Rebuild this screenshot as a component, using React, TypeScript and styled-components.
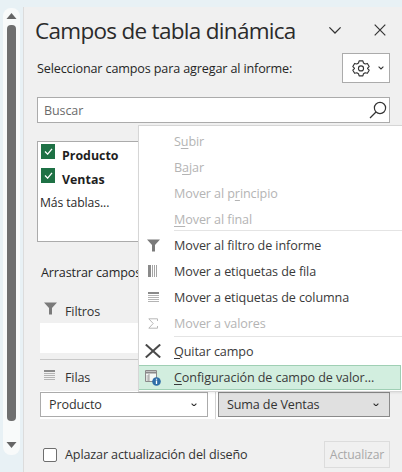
import React from "react";
import styled, { createGlobalStyle } from "styled-components";

const Global = createGlobalStyle`
  html, body { margin: 0; padding: 0; background: #e8f1f5; }
  body { font-family: "Open Sans", "Noto Sans", sans-serif; color: #262626; }
`;

const Page = styled.div`
  position: relative;
  width: 402px;
  height: 472px;
  overflow: hidden;
  display: flex;
  flex-direction: column;
  background: #e8f1f5;
`;
const TopStrip = styled.div`
  height: 7px;
  flex: none;
`;
const Body = styled.div`
  flex: 1;
  display: flex;
  min-height: 0;
`;
const SideGutter = styled.div`
  width: 23px;
  flex: none;
  padding: 1px 0 0 3px;
  box-sizing: border-box;
`;
const Scroll = styled.div`
  width: 17px;
  height: 447px;
  border-radius: 8px;
  background: #f8fafa;
  display: flex;
  flex-direction: column;
  align-items: center;
  padding: 5px 0;
  box-sizing: border-box;
`;
const Thumb = styled.div`
  width: 9px;
  height: 396px;
  margin: 6px 0 21px;
  border-radius: 4px;
  background: #6f6f6f;
  flex: none;
`;
const Pane = styled.div`
  flex: 1;
  background: #f0f0f0;
  border-left: 1px solid #dcdcdc;
  padding: 0 12px;
  display: flex;
  flex-direction: column;
  min-width: 0;
`;
const TitleRow = styled.div`
  display: flex;
  align-items: center;
  height: 46px;
  flex: none;
`;
const Title = styled.h1`
  margin: 0 0 0 -1px;
  flex: 1;
  font-size: 22.5px;
  font-weight: 400;
  color: #2b2b2b;
  white-space: nowrap;
  letter-spacing: -0.7px;
`;
const TitleButtons = styled.div`
  display: flex;
  gap: 32px;
  margin-right: 4px;
  align-items: center;
`;
const SelectRow = styled.div`
  display: flex;
  align-items: center;
  justify-content: space-between;
  height: 30px;
  padding-left: 1px;
  flex: none;
`;
const SmallText = styled.span`
  font-size: 12.6px;
  letter-spacing: -0.14px;
  color: #262626;
  white-space: nowrap;
`;
const GearButton = styled.div`
  width: 43px;
  height: 28px;
  border: 1px solid #ababab;
  background: #fff;
  display: flex;
  align-items: center;
  justify-content: center;
  gap: 8px;
  padding-left: 3px;
`;
const SearchBox = styled.div`
  height: 24px;
  margin-top: 14px;
  margin-left: 1px;
  flex: none;
  border: 1px solid #ababab;
  background: #fff;
  display: flex;
  align-items: center;
  justify-content: space-between;
  padding: 0 2px 0 6px;
  font-size: 12.5px;
  letter-spacing: -0.1px;
  color: #6b6b6b;
`;
const FieldList = styled.div`
  height: 101px;
  box-sizing: border-box;
  margin-top: 18px;
  margin-left: 1px;
  flex: none;
  border: 1px solid #ababab;
  background: #fff;
  padding: 1px 2px;
  display: flex;
  flex-direction: column;
`;
const FieldRow = styled.div`
  display: flex;
  align-items: center;
  height: 24px;
  gap: 7px;
  padding-left: 1px;
  font-size: 12.4px;
  font-weight: 700;
  color: #1f1f1f;
`;
const CheckMark = styled.div`
  width: 14px;
  height: 15px;
  background: #1e7145;
  display: flex;
  align-items: center;
  justify-content: center;
  margin-top: -7px;
`;
const MoreTables = styled.div`
  font-size: 12.2px;
  letter-spacing: -0.1px;
  height: 24px;
  line-height: 24px;
  color: #2b2b2b;
`;
const DragLabel = styled(SmallText)`
  display: block;
  margin-top: 21px;
  margin-left: 5px;
  height: 20px;
  line-height: 20px;
  flex: none;
`;
const AreaLabel = styled.div`
  display: flex;
  align-items: center;
  gap: 8px;
  height: 22px;
  margin-left: 8px;
  font-size: 12.6px;
  letter-spacing: -0.14px;
  color: #333;
  flex: none;
  svg { margin-top: -5px; }
`;
const FilterLabel = styled(AreaLabel)`
  margin-top: 17px;
`;
const RowsLabel = styled(AreaLabel)`
  margin-top: 6px;
  gap: 10px;
`;
const DropZone = styled.div`
  height: 30px;
  margin: 1px 0 0 4px;
  background: #fff;
  flex: none;
`;
const Rule = styled.div`
  height: 1px;
  margin: 6px 0 0 4px;
  background: #c8c8c8;
  flex: none;
`;
const Columns = styled.div`
  display: grid;
  grid-template-columns: 176px 1fr;
  height: 28px;
  margin: 3px 0 0 4px;
  padding-top: 1px;
  box-sizing: border-box;
  background: #fff;
  flex: none;
`;
const ColLeft = styled.div`
  padding-right: 7px;
  border-right: 1px solid #d4d4d4;
  height: 27px;
  box-sizing: border-box;
`;
const ColRight = styled.div`
  padding-left: 2px;
`;
const Select = styled.div<{ $active?: boolean }>`
  height: 23px;
  border: 1px solid ${(p) => (p.$active ? "#8a8a8a" : "#ababab")};
  background: ${(p) => (p.$active ? "#e0e0e0" : "#fff")};
  display: flex;
  align-items: center;
  justify-content: space-between;
  padding: 0 10px 0 8px;
  font-size: 12.6px;
  letter-spacing: -0.14px;
  color: #333;
`;
const Footer = styled.div`
  display: flex;
  align-items: center;
  justify-content: space-between;
  margin-top: 22px;
  height: 27px;
  flex: none;
`;
const DeferLabel = styled.label`
  display: flex;
  align-items: center;
  gap: 8px;
  margin-left: 7px;
  font-size: 12.6px;
  letter-spacing: -0.14px;
  color: #333;
  white-space: nowrap;
`;
const CheckBox = styled.span`
  display: block;
  width: 12px;
  height: 12px;
  border: 1px solid #6e6e6e;
  border-radius: 2px;
  background: #fff;
`;
const UpdateButton = styled.div`
  width: 64px;
  height: 25px;
  border: 1px solid #dcdcdc;
  background: #f0f0f0;
  display: flex;
  align-items: center;
  justify-content: center;
  font-size: 12.2px;
  letter-spacing: -0.14px;
  color: #a8a8a8;
`;
const Menu = styled.div`
  position: absolute;
  left: 138px;
  top: 125px;
  width: 264px;
  height: 267px;
  box-sizing: border-box;
  background: #fff;
  border: 1px solid #d6d6d6;
  border-right: none;
  padding-top: 2px;
  box-shadow: 1px 1px 2px rgba(0,0,0,.08);
`;
const MenuItem = styled.div<{ $disabled?: boolean; $active?: boolean }>`
  height: ${(p) => (p.$active ? "25px" : "26px")};
  margin: ${(p) => (p.$active ? "1px 1px 0 0" : "0")};
  box-sizing: border-box;
  display: flex;
  align-items: center;
  font-size: 12.6px;
  letter-spacing: -0.1px;
  white-space: nowrap;
  color: ${(p) => (p.$disabled ? "#b4b4b4" : "#3a3a3a")};
  background: ${(p) => (p.$active ? "#d2eedf" : "transparent")};
  border: 1px solid ${(p) => (p.$active ? "#9fcfb4" : "transparent")};
  border-left: none;
  u { text-underline-offset: 1.5px; }
`;
const MenuIcon = styled.span`
  width: 28px;
  padding-right: 7px;
  flex: none;
  display: flex;
  justify-content: center;
`;
const MenuSep = styled.div`
  height: 1px;
  margin: -2px 0 1px 35px;
  background: #e4e4e4;
`;
const MenuSepLow = styled(MenuSep)`
  margin: 0 0 1px 35px;
`;
const ScrollArrow = styled.svg`
  flex: none;
`;

const Funnel = ({ c = "#7a7a7a", s = 13 }: { c?: string; s?: number }) => (
  <svg width={s} height={s} viewBox="0 0 14 14"><path d="M0 .5h14L8.6 6.5v7H5.4v-7z" fill={c} /></svg>
);
const RowsIcon = ({ c = "#8a8a8a" }: { c?: string }) => (
  <svg width="11" height="10" viewBox="0 0 11 10">
    <path d="M0 0h11v2H0z" fill={c} />
    <path d="M0 3.5h11M0 5.5h11M0 7.5h11M0 9.5h11" stroke="#b4b4b4" strokeWidth="1" />
  </svg>
);
const ColsIcon = () => (
  <svg width="10" height="12" viewBox="0 0 10 12">
    <path d="M0 0h3v12H0z" fill="#8a8a8a" />
    <path d="M4.5 0v12M6.5 0v12M8.5 0v12" stroke="#a4a4a4" strokeWidth="1" />
  </svg>
);
const Chevron = ({ w = 9, c = "#333", sw = 1.8 }: { w?: number; c?: string; sw?: number }) => (
  <svg width={w} height={w * 0.6} viewBox="0 0 10 6"><path d="M1 1l4 4 4-4" fill="none" stroke={c} strokeWidth={sw} /></svg>
);
const Check = () => (
  <svg width="9" height="7" viewBox="0 0 10 8"><path d="M1 4l3 3 5-6" fill="none" stroke="#fff" strokeWidth="1.5" /></svg>
);
const Gear = () => (
  <svg width="18" height="18" viewBox="0 0 24 24" fill="none" stroke="#333" strokeWidth="1.5" strokeLinejoin="round">
    <path d="M9.5 2.5h5l.8 2.8 2.3 1.3 2.9-.7 2.4 4.2-2.1 2 0 .8 2.1 2-2.4 4.2-2.9-.7-2.3 1.3-.8 2.8h-5l-.8-2.8-2.3-1.3-2.9.7L1.1 14.9l2.1-2v-.8l-2.1-2 2.4-4.2 2.9.7 2.3-1.3z" />
    <circle cx="12" cy="12.5" r="3.4" />
  </svg>
);
const Search = () => (
  <svg width="18" height="18" viewBox="0 0 18 18" fill="none" stroke="#333" strokeWidth="1.2">
    <circle cx="11" cy="7" r="5.6" />
    <path d="M7 11L1 17" />
  </svg>
);
const Close = () => (
  <svg width="12" height="12" viewBox="0 0 12 12"><path d="M.7.7l10.6 10.6M11.3.7L.7 11.3" stroke="#333" strokeWidth="1.2" /></svg>
);
const Sigma = () => (
  <svg width="10" height="11" viewBox="0 0 10 11"><path d="M9.5 3V.8H.8l4.4 4.7-4.4 4.7h8.7V8" fill="none" stroke="#b8b8b8" strokeWidth="1" /></svg>
);
const BigX = () => (
  <svg width="16" height="14" viewBox="0 0 16 14"><path d="M.8.5l14.4 13M15.2.5L.8 13.5" stroke="#4a4a4a" strokeWidth="2" /></svg>
);
const ValueSettings = () => (
  <svg width="16" height="16" viewBox="0 0 16 16">
    <path d="M.5.5h11v11H.5z" fill="#f4f8f5" stroke="#8a8a8a" />
    <path d="M.5 2.5h11" stroke="#8a8a8a" strokeWidth="2" />
    <path d="M4 4v7M1.5 6H4M1.5 8H4M1.5 10H4" stroke="#a0a0a0" />
    <circle cx="11.5" cy="11.5" r="4.3" fill="#2f6ea8" />
    <path d="M11.5 10.6v3.4M11.5 8.8v1" stroke="#fff" strokeWidth="1.3" />
  </svg>
);

export default function App() {
  return (
    <>
      <Global />
      <Page>
        <TopStrip />
        <Body>
          <SideGutter>
            <Scroll>
              <ScrollArrow width="11" height="6" viewBox="0 0 10 6"><path d="M5 0l5 6H0z" fill="#666" /></ScrollArrow>
              <Thumb />
              <ScrollArrow width="11" height="6" viewBox="0 0 10 6"><path d="M0 0h10L5 6z" fill="#666" /></ScrollArrow>
            </Scroll>
          </SideGutter>
          <Pane>
            <TitleRow>
              <Title>Campos de tabla dinámica</Title>
              <TitleButtons>
                <Chevron w={14} sw={0.9} />
                <Close />
              </TitleButtons>
            </TitleRow>
            <SelectRow>
              <SmallText>Seleccionar campos para agregar al informe:</SmallText>
              <GearButton><Gear /><Chevron w={6} /></GearButton>
            </SelectRow>
            <SearchBox>Buscar<Search /></SearchBox>
            <FieldList>
              <FieldRow><CheckMark><Check /></CheckMark>Producto</FieldRow>
              <FieldRow><CheckMark><Check /></CheckMark>Ventas</FieldRow>
              <MoreTables>Más tablas...</MoreTables>
            </FieldList>
            <DragLabel>Arrastrar campos</DragLabel>
            <FilterLabel><Funnel />Filtros</FilterLabel>
            <DropZone />
            <Rule />
            <RowsLabel><RowsIcon />Filas</RowsLabel>
            <Columns>
              <ColLeft><Select>Producto<Chevron w={6} /></Select></ColLeft>
              <ColRight><Select $active>Suma de Ventas<Chevron w={6} /></Select></ColRight>
            </Columns>
            <Footer>
              <DeferLabel><CheckBox />Aplazar actualización del diseño</DeferLabel>
              <UpdateButton>Actualizar</UpdateButton>
            </Footer>
          </Pane>
        </Body>
        <Menu>
          <MenuItem $disabled><MenuIcon />S<u>u</u>bir</MenuItem>
          <MenuItem $disabled><MenuIcon />B<u>a</u>jar</MenuItem>
          <MenuItem $disabled><MenuIcon />Mover al p<u>r</u>incipio</MenuItem>
          <MenuItem $disabled><MenuIcon /><u>M</u>over al final</MenuItem>
          <MenuSep />
          <MenuItem><MenuIcon><Funnel /></MenuIcon>Mover al filtro de informe</MenuItem>
          <MenuItem><MenuIcon><ColsIcon /></MenuIcon>Mover a etiquetas de fila</MenuItem>
          <MenuItem><MenuIcon><RowsIcon /></MenuIcon>Mover a etiquetas de columna</MenuItem>
          <MenuItem $disabled><MenuIcon><Sigma /></MenuIcon>Mover a valores</MenuItem>
          <MenuSepLow />
          <MenuItem><MenuIcon><BigX /></MenuIcon><u>Q</u>uitar campo</MenuItem>
          <MenuItem $active><MenuIcon><ValueSettings /></MenuIcon><u>C</u>onfiguración de campo de valor...</MenuItem>
        </Menu>
      </Page>
    </>
  );
}
